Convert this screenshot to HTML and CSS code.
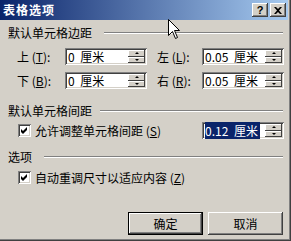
FILE: index.html
```html
<!DOCTYPE html>
<html>
<head>
<meta charset="utf-8">
<link rel="stylesheet" href="styles.css">
</head>
<body>
<div class="win">
  <div class="title">
    <span class="title-text">表格选项</span>
    <div class="tbtns">
      <span class="tbtn help">?</span>
      <span class="tbtn close"><svg width="8" height="7" viewBox="0 0 8 7"><path d="M0 0h2l2 2 2-2h2L5 3.5 8 7H6L4 5 2 7H0l3-3.5z" fill="#000"/></svg></span>
    </div>
  </div>
  <div class="body">
    <div class="ghead g1"><span class="glabel">默认单元格边距</span><i class="etch"></i></div>
    <div class="margins">
      <label class="flabel">上 (<u>T</u>):</label>
      <div class="spin"><span class="val">0 厘米</span><span class="spbtns"><span class="sb up"></span><span class="sb down"></span></span></div>
      <label class="flabel right">左 (<u>L</u>):</label>
      <div class="spin"><span class="val">0.05 厘米</span><span class="spbtns"><span class="sb up"></span><span class="sb down"></span></span></div>
      <label class="flabel">下 (<u>B</u>):</label>
      <div class="spin"><span class="val">0 厘米</span><span class="spbtns"><span class="sb up"></span><span class="sb down"></span></span></div>
      <label class="flabel right">右 (<u>R</u>):</label>
      <div class="spin"><span class="val">0.05 厘米</span><span class="spbtns"><span class="sb up"></span><span class="sb down"></span></span></div>
    </div>
    <div class="ghead g2"><span class="glabel">默认单元格间距</span><i class="etch"></i></div>
    <div class="crow spacing">
      <span class="cb"><svg width="9" height="9" viewBox="0 0 9 9"><path d="M1 3L3 5L7 1V4L3 8L1 6Z" fill="#000"/></svg></span>
      <span class="clabel">允许调整单元格间距 (<u>S</u>)</span>
      <div class="spin sel"><span class="val"><span class="hl">0.12 厘米</span></span><span class="spbtns"><span class="sb up"></span><span class="sb down"></span></span></div>
    </div>
    <div class="ghead g3"><span class="glabel">选项</span><i class="etch"></i></div>
    <div class="crow opt">
      <span class="cb"><svg width="9" height="9" viewBox="0 0 9 9"><path d="M1 3L3 5L7 1V4L3 8L1 6Z" fill="#000"/></svg></span>
      <span class="clabel">自动重调尺寸以适应内容 (<u>Z</u>)</span>
    </div>
    <div class="buttons">
      <button class="btn default">确定</button>
      <button class="btn">取消</button>
    </div>
  </div>
  <svg class="cursor" width="12" height="20" viewBox="0 0 12 20"><path d="M0.5 0.5V16.5L4.5 12.5L7.5 19.5L9.5 18.5L6.5 11.5H11.5Z" fill="#fff" stroke="#000" stroke-width="1"/></svg>
</div>
</body>
</html>
```
FILE: styles.css
```css
* { box-sizing: border-box; }
html, body { margin: 0; padding: 0; }
body {
  font-family: "Noto Sans CJK SC", "Liberation Sans", sans-serif;
  font-size: 12px;
  color: #000;
  background: #d4d0c8;
}
.win {
  position: relative;
  width: 291px;
  height: 241px;
  background: #d4d0c8;
  padding-right: 3px;
  box-shadow: inset -1px -1px #404040, inset -2px -2px #808080;
  overflow: hidden;
}
.title {
  height: 20px;
  background: linear-gradient(to right, #0a246a, #a6caf0);
  display: flex;
  align-items: center;
  justify-content: space-between;
  padding: 0 2px 0 3px;
}
.title-text {
  color: #fff;
  font-weight: bold;
  font-size: 12px;
  letter-spacing: 1px;
  line-height: 14px;
}
.tbtns { display: flex; gap: 2px; }
.tbtn {
  width: 16px;
  height: 14px;
  background: #d4d0c8;
  box-shadow: inset -1px -1px #404040, inset 1px 1px #fff, inset -2px -2px #808080;
  display: flex;
  align-items: center;
  justify-content: center;
  font-family: "Liberation Sans", sans-serif;
  font-weight: bold;
  font-size: 11px;
  line-height: 14px;
}
.body {
  padding: 6px 5px 0 8px;
}
.ghead {
  display: flex;
  align-items: center;
  height: 14px;
  line-height: 14px;
}
.etch {
  flex: 1;
  height: 2px;
  border-top: 1px solid #808080;
  border-bottom: 1px solid #fff;
  margin-left: 12px;
}
.g2 .etch { margin-left: 8px; }
.margins {
  display: grid;
  grid-template-columns: 48px 82px 55px 82px;
  grid-auto-rows: 17px;
  row-gap: 7px;
  margin-top: 8px;
  padding-left: 9px;
  align-items: center;
}
.flabel { line-height: 17px; white-space: nowrap; }
.flabel.right { padding-left: 10px; }
.spin {
  width: 82px;
  height: 17px;
  background: #fff;
  box-shadow: inset 1px 1px #808080, inset -1px -1px #fff, inset 2px 2px #404040, inset -2px -2px #d4d0c8;
  padding: 2px;
  display: flex;
  align-items: stretch;
}
.val {
  flex: 1;
  padding-left: 1px;
  line-height: 13px;
  white-space: nowrap;
  word-spacing: 3px;
}
.spbtns {
  width: 17px;
  display: flex;
  flex-direction: column;
}
.sb {
  flex: 1;
  background: #d4d0c8;
  box-shadow: inset -1px -1px #404040, inset 1px 1px #fff;
  position: relative;
}
.sb::after {
  content: "";
  position: absolute;
  left: 7px;
  width: 0; height: 0;
  border-left: 2px solid transparent;
  border-right: 2px solid transparent;
}
.sb.up::after { top: 2px; border-bottom: 2px solid #000; }
.sb.down::after { top: 2px; border-top: 2px solid #000; }
.crow {
  display: flex;
  align-items: center;
  padding-left: 10px;
}
.spacing { margin-top: 4px; height: 17px; }
.opt { margin-top: 7px; height: 13px; }
.cb {
  width: 13px;
  height: 13px;
  background: #fff;
  box-shadow: inset 1px 1px #808080, inset -1px -1px #fff, inset 2px 2px #404040, inset -2px -2px #d4d0c8;
  padding: 2px;
  display: flex;
}
.clabel { margin-left: 4px; line-height: 13px; white-space: nowrap; }
.spacing .spin { margin-left: auto; margin-right: -1px; }
.hl { background: #0a246a; color: #fff; padding-right: 2px; }
.g2 { margin-top: 15px; }
.g3 { margin-top: 11px; }
.buttons {
  display: flex;
  justify-content: flex-end;
  gap: 5px;
  margin-top: 28px;
}
.btn {
  width: 75px;
  height: 23px;
  border: none;
  margin: 0;
  padding: 0;
  background: #d4d0c8;
  font-family: "Noto Sans CJK SC", sans-serif;
  font-size: 12px;
  color: #000;
  box-shadow: inset -1px -1px #404040, inset 1px 1px #fff, inset -2px -2px #808080;
}
.btn.default {
  box-shadow: inset 0 0 0 1px #000, inset -2px -2px #404040, inset 2px 2px #fff, inset -3px -3px #808080;
}
.cursor {
  position: absolute;
  left: 168px;
  top: 19px;
}
```
